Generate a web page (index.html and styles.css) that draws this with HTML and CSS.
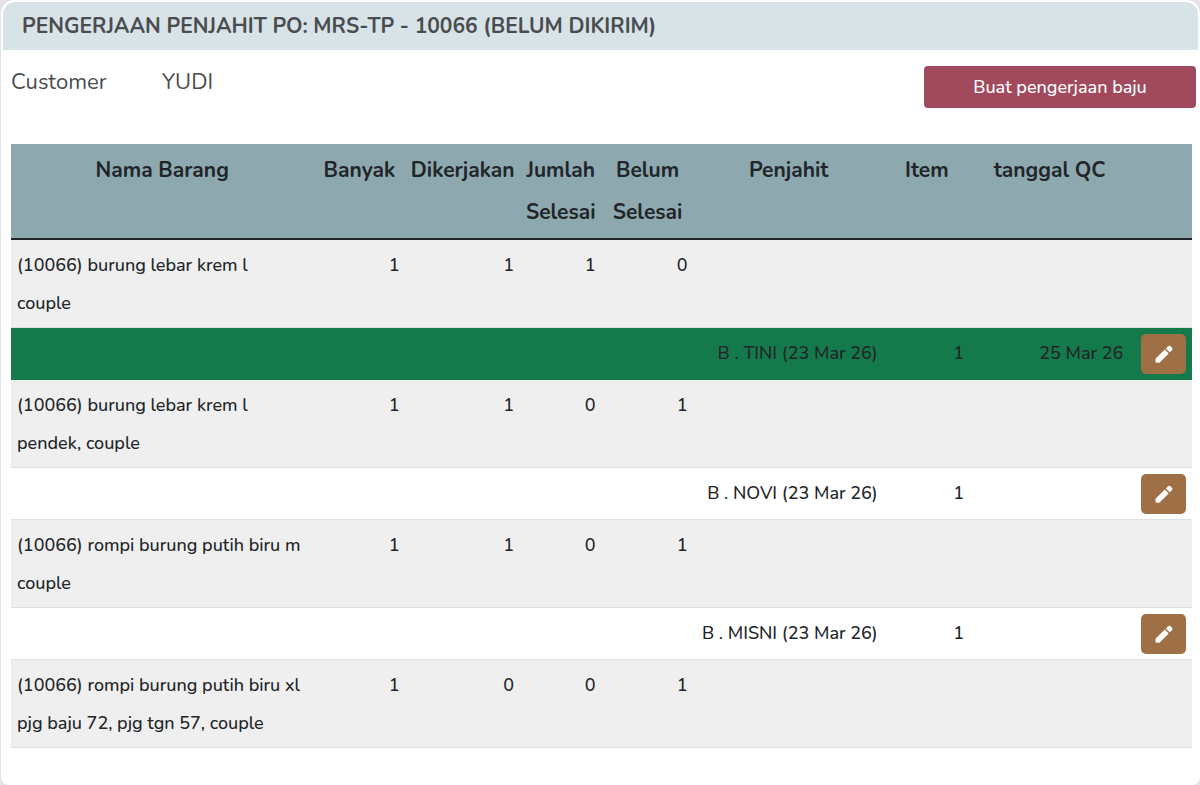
FILE: index.html
```html
<!DOCTYPE html>
<html lang="id">
<head>
  <meta charset="UTF-8">
  <title>Pengerjaan Penjahit</title>
  <link rel="stylesheet" href="styles.css">
</head>
<body>

  <svg class="sprite" aria-hidden="true">
    <symbol id="pencil" viewBox="0 0 24 24">
      <path d="M3.500 16.800 12.800 7.500l3.900 3.900L7.400 20.700H5a1.500 1.500 0 0 1-1.500-1.500z"/>
      <path d="M13.900 6.400 16 4.300a1.800 1.800 0 0 1 2.500 0L19.900 5.700a1.800 1.800 0 0 1 0 2.500L17.800 10.300z"/>
    </symbol>
  </svg>

  <main class="card">
    <h1 class="card-header">PENGERJAAN PENJAHIT PO: MRS-TP - 10066 (BELUM DIKIRIM)</h1>

    <div class="info">
      <dl class="customer">
        <dt>Customer</dt>
        <dd>YUDI</dd>
      </dl>
      <button class="btn-create" type="button">Buat pengerjaan baju</button>
    </div>

    <div class="table-wrap">
      <table class="table">
        <colgroup>
          <col class="col-name">
          <col class="col-total">
          <col class="col-worked">
          <col class="col-done">
          <col class="col-open">
          <col class="col-tailor">
          <col class="col-item">
          <col class="col-date">
          <col class="col-action">
        </colgroup>
        <thead>
          <tr>
            <th>Nama Barang</th>
            <th>Banyak</th>
            <th>Dikerjakan</th>
            <th>Jumlah<br>Selesai</th>
            <th>Belum<br>Selesai</th>
            <th>Penjahit</th>
            <th>Item</th>
            <th>tanggal QC</th>
            <th></th>
          </tr>
        </thead>
        <tbody>
          <tr class="product">
            <td>(10066) burung lebar krem l<br>couple</td>
            <td>1</td><td>1</td><td>1</td><td>0</td>
            <td></td><td></td><td></td><td></td>
          </tr>
          <tr class="finished">
            <td></td><td></td><td></td><td></td><td></td>
            <td>B . TINI (23 Mar 26)</td><td>1</td><td>25 Mar 26</td>
            <td><button class="btn-edit" type="button" aria-label="Edit"><svg><use href="#pencil"/></svg></button></td>
          </tr>
          <tr class="product">
            <td>(10066) burung lebar krem l<br>pendek, couple</td>
            <td>1</td><td>1</td><td>0</td><td>1</td>
            <td></td><td></td><td></td><td></td>
          </tr>
          <tr>
            <td></td><td></td><td></td><td></td><td></td>
            <td>B . NOVI (23 Mar 26)</td><td>1</td><td></td>
            <td><button class="btn-edit" type="button" aria-label="Edit"><svg><use href="#pencil"/></svg></button></td>
          </tr>
          <tr class="product">
            <td>(10066) rompi burung putih biru m<br>couple</td>
            <td>1</td><td>1</td><td>0</td><td>1</td>
            <td></td><td></td><td></td><td></td>
          </tr>
          <tr>
            <td></td><td></td><td></td><td></td><td></td>
            <td>B . MISNI (23 Mar 26)</td><td>1</td><td></td>
            <td><button class="btn-edit" type="button" aria-label="Edit"><svg><use href="#pencil"/></svg></button></td>
          </tr>
          <tr class="product">
            <td>(10066) rompi burung putih biru xl<br>pjg baju 72, pjg tgn 57, couple</td>
            <td>1</td><td>0</td><td>0</td><td>1</td>
            <td></td><td></td><td></td><td></td>
          </tr>
        </tbody>
      </table>
    </div>
  </main>

</body>
</html>
```
FILE: styles.css
```css
* {
  box-sizing: border-box;
}

body {
  margin: 0;
  background: #e3e4e5;
  font-family: Nunito, Lato, sans-serif;
  font-size: 18px;
  font-weight: 500;
  color: #212529;
}

.sprite {
  display: none;
}

.card {
  min-height: 100vh;
  margin-left: 1px;
  padding: 2px 2px 0;
  background: white;
  border-radius: 14px 14px 8px 8px;
}

.card-header {
  margin: 0;
  padding: 0 19px;
  background: #d7e3e7;
  border-radius: 12px 12px 0 0;
  font-size: 21px;
  font-weight: bold;
  line-height: 48px;
  color: #4a4d4f;
}

.info {
  display: flex;
  justify-content: space-between;
  align-items: flex-start;
  padding: 16px 2px 36px 8px;
}

.customer {
  display: flex;
  margin: 0;
  font-size: 22px;
  font-weight: normal;
  line-height: 32px;
  color: #4a4d4f;
}

.customer dt {
  width: 151px;
}

.customer dd {
  margin: 0;
}

.btn-create {
  width: 272px;
  height: 42px;
  background: #a14a5e;
  border: none;
  border-radius: 4px;
  font: inherit;
  color: white;
  cursor: pointer;
}

.table-wrap {
  padding: 0 6px 0 8px;
}

.table {
  width: 100%;
  table-layout: fixed;
  border-spacing: 0;
}

.col-name { width: 25.6%; }
.col-total { width: 7.8%; }
.col-worked { width: 9.7%; }
.col-done { width: 6.9%; }
.col-open { width: 7.8%; }
.col-tailor { width: 16.1%; }
.col-item { width: 7.3%; }
.col-date { width: 13.5%; }
.col-action { width: 5.3%; }

th {
  padding: 5px 0;
  background: #8ea8af;
  border-bottom: 2px solid #212529;
  font-size: 21px;
  line-height: 42px;
  vertical-align: top;
}

td {
  padding: 6px 6px 5px;
  border-bottom: 1px solid #dee0e2;
  line-height: 38px;
  text-align: right;
  vertical-align: top;
}

td:first-child {
  text-align: left;
}

.product td {
  background: #efefef;
}

.finished td {
  background: #147a4b;
  border-color: #147a4b;
}

.btn-edit {
  display: flex;
  justify-content: center;
  align-items: center;
  width: 45px;
  height: 40px;
  margin-left: auto;
  padding: 0;
  background: #9f6f46;
  border: none;
  border-radius: 5px;
  cursor: pointer;
}

.btn-edit svg {
  width: 24px;
  height: 24px;
  fill: white;
}
```
